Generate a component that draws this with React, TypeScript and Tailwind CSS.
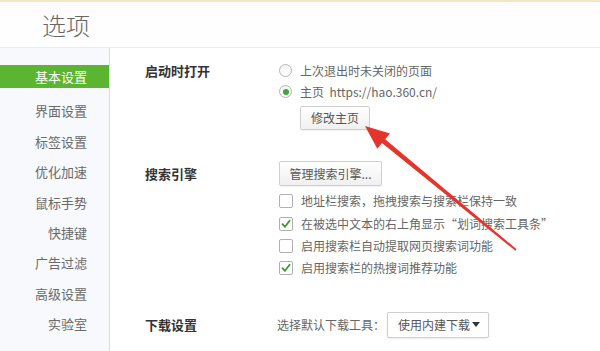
import React from "react";

const NAV = ["基本设置", "界面设置", "标签设置", "优化加速", "鼠标手势", "快捷键", "广告过滤", "高级设置", "实验室"];

function Radio({ checked }: { checked?: boolean }) {
  return (
    <span className="flex h-[13px] w-[13px] items-center justify-center rounded-full border border-[#b5b5b5] bg-gradient-to-b from-[#f4f4f4] to-white">
      {checked && <span className="h-[6px] w-[6px] rounded-full bg-[#3fa535]" />}
    </span>
  );
}

function Check({ checked }: { checked?: boolean }) {
  return (
    <span className="flex h-[14px] w-[14px] items-center justify-center rounded-[2px] border border-[#b0b0b0] bg-white">
      {checked && (
        <svg width="10" height="10" viewBox="0 0 10 10">
          <path d="M1.5 5.2 L4 7.8 L8.6 1.8" fill="none" stroke="#3a9a2c" strokeWidth="1.8" strokeLinecap="round" strokeLinejoin="round" />
        </svg>
      )}
    </span>
  );
}

function Btn({ children, w }: { children: React.ReactNode; w: string }) {
  return (
    <div className={`${w} flex h-full items-center justify-center rounded-[2px] border border-[#cfcfcf] bg-gradient-to-b from-white to-[#f0f0f0] text-[12px] text-[#555] shadow-[0_1px_1px_rgba(0,0,0,0.06)]`}>
      {children}
    </div>
  );
}

function Section({ label, rowH, children }: { label: string; rowH: string; children: React.ReactNode }) {
  return (
    <div className="flex">
      <div className={`${rowH} flex w-[134px] shrink-0 items-center text-[13px] font-bold text-[#333]`}>{label}</div>
      <div className="flex flex-col">{children}</div>
    </div>
  );
}

export default function App() {
  return (
    <div
      className="relative flex h-[351px] w-[600px] flex-col overflow-hidden border-t-2 border-[#f1e7c7] bg-white"
      style={{ fontFamily: '"Microsoft YaHei", "Noto Sans CJK SC", "Noto Sans", sans-serif' }}
    >
      <div className="flex h-[46px] shrink-0 items-center border-b border-[#ececec] bg-gradient-to-b from-[#fdfbff] to-white pl-[42px]">
        <span className="text-[24px] font-light leading-none text-[#666]">选项</span>
      </div>

      <div className="flex flex-1">
        <div className="w-[110px] shrink-0 border-r border-[#dedede] bg-[#f7f9fc] pt-[17px]">
          {NAV.map((n, i) =>
            i === 0 ? (
              <div key={n} className="mb-[8px] flex h-[23px] items-center justify-end bg-[#5cb531] pr-[22px] text-[13px] text-white">
                {n}
              </div>
            ) : (
              <div key={n} className="flex h-[30.4px] items-center justify-end pr-[22px] text-[13px] text-[#6a6a6a]">
                {n}
              </div>
            )
          )}
        </div>

        <div className="flex flex-col pl-[35px] pt-[12px]">
          <Section label="启动时打开" rowH="h-[21px]">
            <div className="flex h-[21px] items-center gap-[8px] text-[12px] text-[#666]">
              <Radio />
              <span>上次退出时未关闭的页面</span>
            </div>
            <div className="flex h-[21px] items-center gap-[8px] text-[12px] text-[#666]">
              <Radio checked />
              <span>主页&nbsp;&nbsp;https://hao.360.cn/</span>
            </div>
            <div className="ml-[21px] mt-[4px] h-[24px]">
              <Btn w="w-[70px]">修改主页</Btn>
            </div>
          </Section>

          <div className="mt-[31px]">
            <Section label="搜索引擎" rowH="h-[25px]">
              <div className="h-[25px]">
                <Btn w="w-[103px]">管理搜索引擎...</Btn>
              </div>
              <div className="mt-[4px] flex flex-col text-[12px] text-[#666]">
                {[
                  ["地址栏搜索，拖拽搜索与搜索栏保持一致", false],
                  ["在被选中文本的右上角显示“划词搜索工具条”", true],
                  ["启用搜索栏自动提取网页搜索词功能", false],
                  ["启用搜索栏的热搜词推荐功能", true],
                ].map(([t, c]) => (
                  <div key={t as string} className="flex h-[22.4px] items-center gap-[8px]">
                    <Check checked={c as boolean} />
                    <span>{t as string}</span>
                  </div>
                ))}
              </div>
            </Section>
          </div>

          <div className="mt-[32px]">
            <Section label="下载设置" rowH="h-[26px]">
              <div className="-ml-[2px] flex h-[26px] items-center text-[12px] text-[#666]">
                <span className="w-[110px]">选择默认下载工具：</span>
                <div className="flex h-full w-[102px] items-center justify-between rounded-[2px] border border-[#cfcfcf] bg-white pl-[10px] pr-[8px] text-[#555] shadow-[0_1px_2px_rgba(0,0,0,0.08)]">
                  <span>使用内建下载</span>
                  <svg width="8" height="5" viewBox="0 0 8 5">
                    <path d="M0 0 H8 L4 5 Z" fill="#333" />
                  </svg>
                </div>
              </div>
            </Section>
          </div>
        </div>
      </div>

      <svg className="pointer-events-none absolute left-0 top-0" width="600" height="351" viewBox="0 0 600 351">
        <polygon
          points="365,124 389.9,131.4 385.2,137.2 516.6,247.2 515.4,248.8 382,141 377.3,146.8"
          fill="#e5342c"
        />
      </svg>
    </div>
  );
}
